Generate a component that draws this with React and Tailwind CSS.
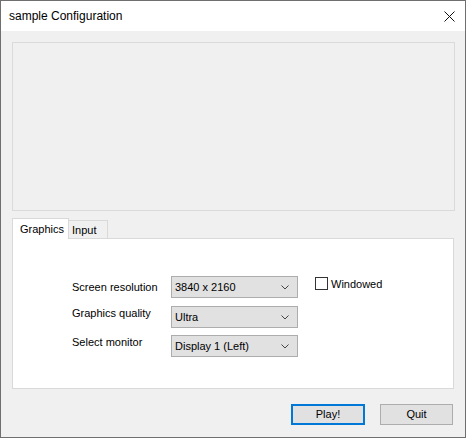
import React, { useState } from 'react'

const font = { fontFamily: '"Liberation Sans", Arial, sans-serif' };

function Chevron() {
  return (
    <svg width="8" height="5" viewBox="0 0 8 5" className="shrink-0">
      <polyline points="0.5,0.5 4,4 7.5,0.5" fill="none" stroke="#444" strokeWidth="1" />
    </svg>
  );
}

function Select({ value }) {
  return (
    <div className='w-[127px] h-[22px] shrink-0 bg-[#e1e1e1] border border-[#adadad] flex items-center justify-between pl-[3px] pr-[8px] text-[11px] text-black'>
      <span>{value}</span>
      <Chevron />
    </div>
  );
}

export default function App() {
  const [tab, setTab] = useState('graphics');

  return (
    <div style={font} className='w-[466px] h-[438px] flex flex-col bg-[#f0f0f0] border border-[#6f6f6f] overflow-hidden'>
      {/* Title bar */}
      <div className='h-[30px] bg-white flex items-center justify-between pl-[8px] pr-[10px] shrink-0'>
        <span className='text-[12px] text-black'>sample Configuration</span>
        <svg width="11" height="11" viewBox="0 0 11 11">
          <path d="M0.5 0.5 L10.5 10.5 M10.5 0.5 L0.5 10.5" stroke="#111" strokeWidth="1" />
        </svg>
      </div>

      <div className='flex flex-col px-[11px]'>
        {/* Banner */}
        <div className='mt-[11px] h-[169px] w-[443px] border border-[#dadada] bg-[#f0f0f0]' />

        {/* Tabs */}
        <div className='mt-[7px] flex items-end text-[11px] text-black'>
          <button
            onClick={() => setTab('graphics')}
            className='relative z-10 -mb-px h-[21px] w-[57px] bg-white border border-b-0 border-[#d9d9d9] text-left pl-[7px] leading-[19px]'>
            Graphics
          </button>
          <button
            onClick={() => setTab('input')}
            className='h-[18px] w-[39px] bg-[#f0f0f0] border border-l-0 border-b-0 border-[#d9d9d9] text-left pl-[3px] leading-[18px]'>
            Input
          </button>
        </div>

        {/* Tab panel */}
        <div className='h-[151px] w-[442px] bg-white border border-[#d9d9d9] pt-[37px] pl-[59px] text-[11px] text-black leading-[13px]'>
          <div className='flex'>
            <div className='w-[99px] mt-[5px]'>Screen resolution</div>
            <Select value="3840 x 2160" />
            <div className='ml-[17px] mt-[1px] flex items-start'>
              <div className='w-[13px] h-[13px] border border-[#333] bg-white' />
              <span className='ml-[3px] mt-[1px]'>Windowed</span>
            </div>
          </div>
          <div className='flex mt-[8px]'>
            <div className='w-[99px] mt-[1px]'>Graphics quality</div>
            <Select value="Ultra" />
          </div>
          <div className='flex mt-[7px]'>
            <div className='w-[99px] mt-[1px]'>Select monitor</div>
            <Select value="Display 1 (Left)" />
          </div>
        </div>
      </div>

      {/* Buttons */}
      <div className='mt-[15px] flex justify-end pr-[12px] gap-[15px] text-[11px] text-black'>
        <button className='w-[74px] h-[21px] bg-[#e1e1e1] border-2 border-[#0078d7]'>Play!</button>
        <button className='w-[73px] h-[21px] bg-[#e1e1e1] border border-[#adadad]'>Quit</button>
      </div>
    </div>
  )
}
